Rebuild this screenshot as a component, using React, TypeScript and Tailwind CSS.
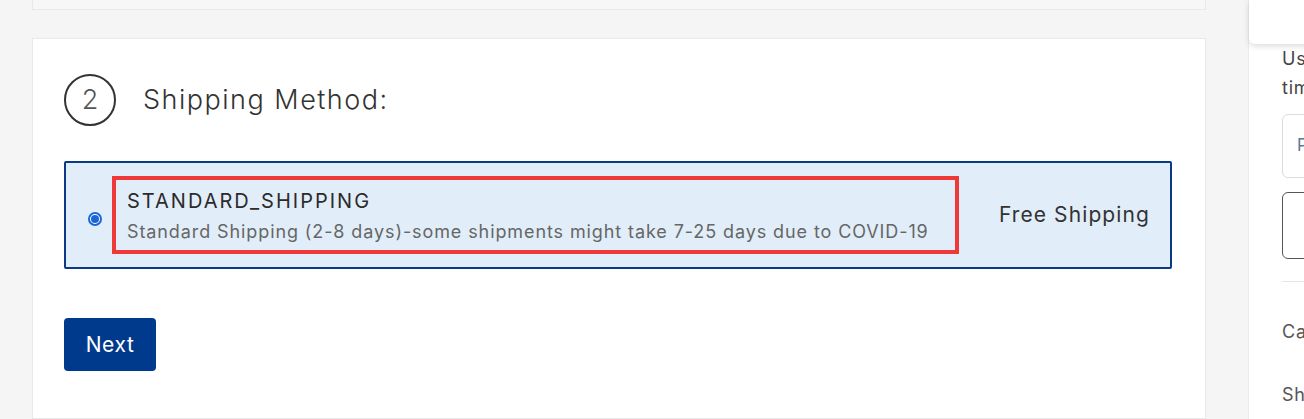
import React from 'react';

const font = { fontFamily: '"Inter", "Noto Sans", sans-serif' };

export default function App() {
  return (
    <div
      className="flex h-[419px] w-[1304px] overflow-hidden bg-[#f5f5f5] text-[#333]"
      style={font}
    >
      {/* Left: checkout steps */}
      <div className="flex w-[1206px] shrink-0 flex-col gap-[28px] pl-[32px]">
        <div className="h-[10px] shrink-0 border-x border-b border-[#e9e9e9] bg-[#f7f7f7]" />

        <section className="flex-1 border border-[#e9e9e9] bg-white pl-[31px] pr-[33px] pt-[35px]">
          <div className="flex items-center gap-[27px]">
            <div className="flex h-[52px] w-[52px] items-center justify-center rounded-full border-2 border-[#333] text-[27px] font-light text-[#555]">
              2
            </div>
            <h2 className="text-[27px] font-light tracking-[1.5px] text-[#333]">Shipping Method:</h2>
          </div>

          <label className="mt-[35px] flex h-[108px] items-center rounded-[2px] border-2 border-[#0a3a87] bg-[#e1eef9] pl-[22px] pr-[20px]">
            <span className="mt-[8px] flex h-[14px] w-[14px] shrink-0 items-center justify-center rounded-full border-2 border-[#1a66d6] bg-white">
              <span className="h-[8px] w-[8px] rounded-full bg-[#1a66d6]" />
            </span>
            <div className="ml-[10px] flex h-[78px] w-[847px] flex-col justify-center border-4 border-[#ef3838] pl-[11px] pt-[2px]">
              <div className="text-[20px] leading-[26px] tracking-[2px] text-[#2b2b2b]">STANDARD_SHIPPING</div>
              <div className="mt-[6px] whitespace-nowrap text-[18px] leading-[24px] tracking-[0.9px] text-[#666]">
                Standard Shipping (2-8 days)-some shipments might take 7-25 days due to COVID-19
              </div>
            </div>
            <div className="ml-auto text-[21px] tracking-[1.1px] text-[#333]">Free Shipping</div>
          </label>

          <button className="mt-[49px] h-[53px] w-[92px] rounded-[4px] bg-[#003a8c] text-[21px] tracking-[0.6px] text-white">
            Next
          </button>
        </section>
      </div>

      {/* Right: order summary sidebar */}
      <aside className="relative ml-[42px] flex-1 border-l border-[#ececec] bg-white">
        <div className="absolute left-0 top-0 h-[44px] w-full rounded-bl-[6px] bg-white shadow-[0_2px_6px_rgba(0,0,0,0.15)]" />
        <div className="pl-[33px] pt-[44px] text-[18px] tracking-[0.8px] text-[#444]">
          <p className="whitespace-nowrap leading-[29px]">Use your code</p>
          <p className="whitespace-nowrap leading-[29px]">time</p>
          <div className="mt-[12px] flex h-[64px] w-[200px] items-center rounded-[6px] border border-[#dcdcdc] pl-[14px] text-[17px] text-[#5b7896]">
            Promo code
          </div>
          <div className="mt-[14px] h-[67px] w-[200px] rounded-[6px] border border-[#555]" />
          <hr className="mt-[22px] border-[#e6e6e6]" />
          <p className="mt-[36px] whitespace-nowrap text-[#555]">Cart total</p>
          <p className="mt-[36px] whitespace-nowrap text-[#555]">Shipping</p>
        </div>
      </aside>
    </div>
  );
}
